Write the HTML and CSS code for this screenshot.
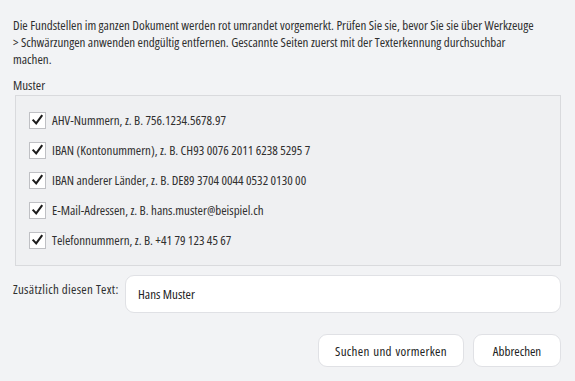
FILE: index.html
```html
<!DOCTYPE html>
<html lang="de">
<head>
<meta charset="utf-8">
<link rel="stylesheet" href="styles.css">
</head>
<body>
<div class="dialog">
  <p class="intro">Die Fundstellen im ganzen Dokument werden rot umrandet vorgemerkt. Prüfen Sie sie, bevor Sie sie über Werkzeuge<br>&gt; Schwärzungen anwenden endgültig entfernen. Gescannte Seiten zuerst mit der Texterkennung durchsuchbar<br>machen.</p>
  <div class="section-label">Muster</div>
  <div class="box">
    <label class="row"><span class="check"><svg viewBox="0 0 16 16" width="16" height="16"><path d="M3.6 8.4 L6.6 11.6 L12.4 3.8" fill="none" stroke="#1c1c1c" stroke-width="2.2" stroke-linecap="square" stroke-linejoin="miter"/></svg></span><span>AHV-Nummern, z. B. 756.1234.5678.97</span></label>
    <label class="row"><span class="check"><svg viewBox="0 0 16 16" width="16" height="16"><path d="M3.6 8.4 L6.6 11.6 L12.4 3.8" fill="none" stroke="#1c1c1c" stroke-width="2.2" stroke-linecap="square" stroke-linejoin="miter"/></svg></span><span>IBAN (Kontonummern), z. B. CH93 0076 2011 6238 5295 7</span></label>
    <label class="row"><span class="check"><svg viewBox="0 0 16 16" width="16" height="16"><path d="M3.6 8.4 L6.6 11.6 L12.4 3.8" fill="none" stroke="#1c1c1c" stroke-width="2.2" stroke-linecap="square" stroke-linejoin="miter"/></svg></span><span>IBAN anderer Länder, z. B. DE89 3704 0044 0532 0130 00</span></label>
    <label class="row"><span class="check"><svg viewBox="0 0 16 16" width="16" height="16"><path d="M3.6 8.4 L6.6 11.6 L12.4 3.8" fill="none" stroke="#1c1c1c" stroke-width="2.2" stroke-linecap="square" stroke-linejoin="miter"/></svg></span><span>E-Mail-Adressen, z. B. hans.muster@beispiel.ch</span></label>
    <label class="row"><span class="check"><svg viewBox="0 0 16 16" width="16" height="16"><path d="M3.6 8.4 L6.6 11.6 L12.4 3.8" fill="none" stroke="#1c1c1c" stroke-width="2.2" stroke-linecap="square" stroke-linejoin="miter"/></svg></span><span>Telefonnummern, z. B. +41 79 123 45 67</span></label>
  </div>
  <div class="extra">
    <span class="extra-label">Zusätzlich diesen Text:</span>
    <div class="input">Hans Muster</div>
  </div>
  <div class="actions">
    <button class="btn btn-wide">Suchen und vormerken</button>
    <button class="btn btn-cancel">Abbrechen</button>
  </div>
</div>
</body>
</html>
```
FILE: styles.css
```css
html, body {
  margin: 0;
  padding: 0;
  background: #f2f3f5;
}
body {
  font-family: "Open Sans", sans-serif;
  font-stretch: 75%;
  font-size: 13px;
  color: #2f2f2f;
}
.dialog {
  padding: 17px 14px 0 13px;
  display: flex;
  flex-direction: column;
}
.intro {
  margin: 0;
  line-height: 17px;
  white-space: nowrap;
}
.section-label {
  margin-top: 9px;
  line-height: 17px;
}
.box {
  margin: 1px 0 0 2px;
  border: 1px solid #d9dadd;
  background: #eff0f2;
  padding: 9px 13px 10px 13px;
  display: flex;
  flex-direction: column;
}
.row {
  height: 30px;
  display: flex;
  align-items: center;
  gap: 6px;
}
.check {
  width: 15px;
  height: 15px;
  border: 1px solid #bfc0c4;
  background: #ffffff;
  display: flex;
  align-items: center;
  justify-content: center;
}
.check svg { display: block; }
.extra {
  margin-top: 9px;
  display: flex;
  align-items: flex-start;
  gap: 8px;
}
.extra-label {
  margin-top: 5px;
  width: 104px;
  white-space: nowrap;
  letter-spacing: 0.3px;
}
.input {
  flex: 1;
  height: 36px;
  border: 1px solid #e0e1e5;
  border-radius: 9px;
  background: #ffffff;
  display: flex;
  align-items: center;
  padding-left: 12px;
  font-size: 13px;
  color: #222;
}
.actions {
  margin-top: 21px;
  display: flex;
  justify-content: flex-end;
  gap: 9px;
}
.btn {
  font: inherit;
  font-size: 13px;
  color: #222;
  height: 33px;
  border: 1px solid #e0e1e5;
  border-radius: 9px;
  background: #ffffff;
  padding: 0;
}
.btn-wide {
  width: 146px;
  letter-spacing: 0.3px;
  word-spacing: 1px;
}
.btn-cancel { width: 88px; }
```
